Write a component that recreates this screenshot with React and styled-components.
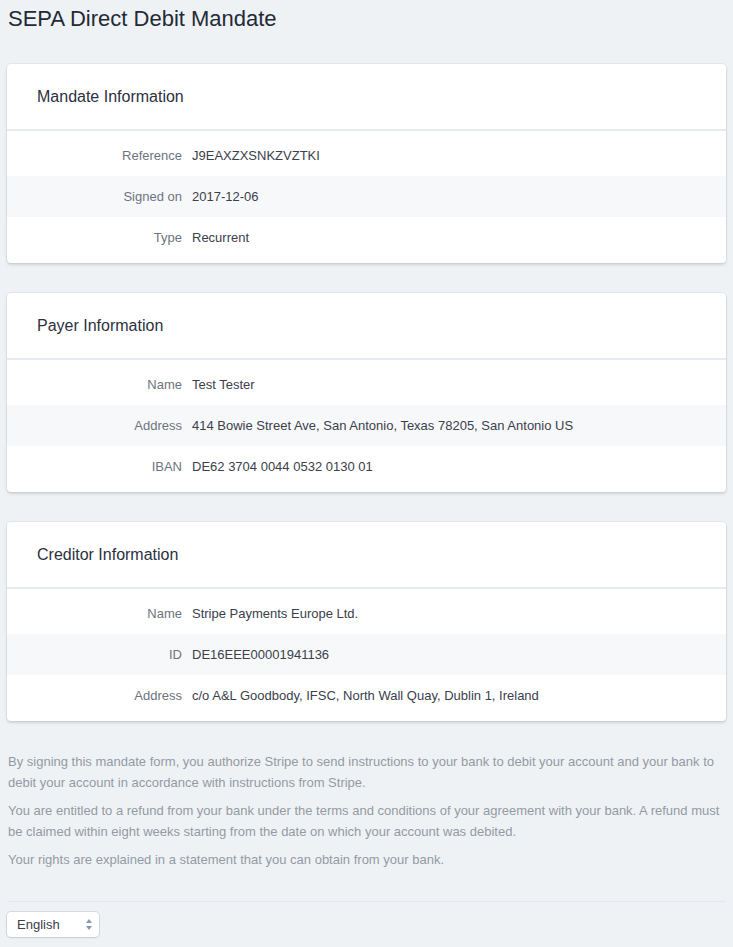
import styled, { createGlobalStyle } from "styled-components";

const GlobalStyle = createGlobalStyle`
  html, body {
    margin: 0;
    background: #eff2f5;
    font-family: "Liberation Sans", Arial, sans-serif;
  }
`;

const Page = styled.div`
  padding: 0 7px 10px 7px;
`;

const Title = styled.h1`
  margin: 0;
  padding: 6px 1px 0 1px;
  height: 64px;
  box-sizing: border-box;
  font-size: 22px;
  font-weight: 400;
  color: #222a35;
`;

const Card = styled.section`
  background: #fff;
  border-radius: 4px;
  box-shadow: 0 0 0 1px rgba(50, 50, 93, 0.06), 0 2px 3px rgba(0, 0, 0, 0.12);
  margin-bottom: 30px;
  overflow: hidden;
`;

const CardHeader = styled.h2`
  margin: 0;
  height: 65px;
  padding: 0 30px;
  display: flex;
  align-items: center;
  font-size: 16px;
  font-weight: 400;
  color: #2b3140;
  border-bottom: 2px solid #e6ebf1;
`;

const CardBody = styled.div`
  padding: 4px 0 5px 0;
`;

const Row = styled.div`
  display: grid;
  grid-template-columns: 175px 1fr;
  column-gap: 10px;
  align-items: center;
  height: 41px;
  font-size: 13px;
  background: ${(p) => (p.$shaded ? "#f7f8fa" : "#fff")};
`;

const Label = styled.span`
  text-align: right;
  color: #6d7480;
`;

const Value = styled.span`
  color: #3b404c;
`;

const Legal = styled.div`
  padding: 0 1px;
`;

const Paragraph = styled.p`
  margin: 0 0 7px 0;
  font-size: 13px;
  line-height: 21px;
  color: #939aa4;
`;

const Footer = styled.div`
  margin-top: 31px;
  border-top: 1px solid #e3e8ee;
  padding-top: 10px;
`;

const SelectBox = styled.div`
  position: relative;
  width: 92px;
  height: 25px;
  background: #fff;
  border-radius: 4px;
  box-shadow: 0 0 0 1px rgba(50, 50, 93, 0.12), 0 1px 2px rgba(0, 0, 0, 0.08);
  display: flex;
  align-items: center;
  padding-left: 10px;
  box-sizing: border-box;
  font-size: 13px;
  color: #3b404c;
`;

const Arrows = styled.svg`
  position: absolute;
  right: 7px;
  top: 7px;
`;

const sections = [
  {
    title: "Mandate Information",
    rows: [
      ["Reference", "J9EAXZXSNKZVZTKI"],
      ["Signed on", "2017-12-06"],
      ["Type", "Recurrent"],
    ],
  },
  {
    title: "Payer Information",
    rows: [
      ["Name", "Test Tester"],
      ["Address", "414 Bowie Street Ave, San Antonio, Texas 78205, San Antonio US"],
      ["IBAN", "DE62 3704 0044 0532 0130 01"],
    ],
  },
  {
    title: "Creditor Information",
    rows: [
      ["Name", "Stripe Payments Europe Ltd."],
      ["ID", "DE16EEE00001941136"],
      ["Address", "c/o A&L Goodbody, IFSC, North Wall Quay, Dublin 1, Ireland"],
    ],
  },
];

const App = () => {
  return (
    <Page>
      <GlobalStyle />
      <Title>SEPA Direct Debit Mandate</Title>
      {sections.map((s) => (
        <Card key={s.title}>
          <CardHeader>{s.title}</CardHeader>
          <CardBody>
            {s.rows.map(([label, value], i) => (
              <Row key={label} $shaded={i === 1}>
                <Label>{label}</Label>
                <Value>{value}</Value>
              </Row>
            ))}
          </CardBody>
        </Card>
      ))}
      <Legal>
        <Paragraph>
          By signing this mandate form, you authorize Stripe to send instructions to your bank to
          debit your account and your bank to debit your account in accordance with instructions
          from Stripe.
        </Paragraph>
        <Paragraph>
          You are entitled to a refund from your bank under the terms and conditions of your
          agreement with your bank. A refund must be claimed within eight weeks starting from the
          date on which your account was debited.
        </Paragraph>
        <Paragraph>
          Your rights are explained in a statement that you can obtain from your bank.
        </Paragraph>
      </Legal>
      <Footer>
        <SelectBox>
          English
          <Arrows width="6" height="11" viewBox="0 0 6 11">
            <path d="M3 0 L6 4 L0 4 Z" fill="#8898aa" />
            <path d="M3 11 L6 7 L0 7 Z" fill="#8898aa" />
          </Arrows>
        </SelectBox>
      </Footer>
    </Page>
  );
};

export default App;
